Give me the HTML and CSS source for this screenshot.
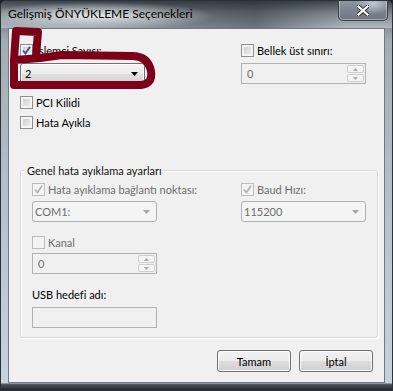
FILE: index.html
```html
<!DOCTYPE html>
<html lang="tr">
  <head>
    <meta charset="UTF-8" />
    <meta name="viewport" content="width=device-width, initial-scale=1.0" />
    <title>Gelişmiş ÖNYÜKLEME Seçenekleri</title>
    <link rel="stylesheet" href="styles.css">
  </head>
  <body>
    <div class="window">
      <div class="titlebar">
        <span class="title">Gelişmiş ÖNYÜKLEME Seçenekleri</span>
        <button class="close-btn" aria-label="Kapat">
          <svg width="12" height="11" viewBox="0 0 12 11">
            <path d="M1.5 1.5 L10.5 9.5 M10.5 1.5 L1.5 9.5" stroke="#2b3036" stroke-width="4" stroke-linecap="round" fill="none" />
            <path d="M1.5 1.5 L10.5 9.5 M10.5 1.5 L1.5 9.5" stroke="#fff" stroke-width="2.2" stroke-linecap="square" fill="none" />
          </svg>
        </button>
      </div>

      <div class="client">
        <div class="cols top-cols">
          <div class="col">
            <label class="check">
              <span class="box checked">
                <svg width="11" height="11" viewBox="0 0 11 11"><path d="M2 5.5 L4.5 8.5 L9 1.8" /></svg>
              </span>
              İşlemci Sayısı:
            </label>
            <div class="combo">
              <span>2</span>
              <svg class="arrow" width="7" height="4" viewBox="0 0 7 4"><polygon points="0,0 7,0 3.5,4" /></svg>
            </div>
          </div>
          <div class="col">
            <label class="check"><span class="box"></span>Bellek üst sınırı:</label>
            <div class="spin">
              <span>0</span>
              <div class="spin-btns">
                <span><svg width="5" height="3" viewBox="0 0 5 3"><polygon points="2.5,0 5,3 0,3" /></svg></span>
                <span><svg width="5" height="3" viewBox="0 0 5 3"><polygon points="0,0 5,0 2.5,3" /></svg></span>
              </div>
            </div>
          </div>
        </div>

        <label class="check pci"><span class="box"></span>PCI Kilidi</label>
        <label class="check debug"><span class="box"></span>Hata Ayıkla</label>

        <fieldset class="group">
          <legend>Genel hata ayıklama ayarları</legend>
          <div class="cols">
            <div class="col">
              <label class="check disabled">
                <span class="box checked">
                  <svg width="11" height="11" viewBox="0 0 11 11"><path d="M2 5.5 L4.5 8.5 L9 1.8" /></svg>
                </span>
                Hata ayıklama bağlantı noktası:
              </label>
              <div class="combo disabled">
                <span>COM1:</span>
                <svg class="arrow" width="7" height="4" viewBox="0 0 7 4"><polygon points="0,0 7,0 3.5,4" /></svg>
              </div>
            </div>
            <div class="col">
              <label class="check disabled">
                <span class="box checked">
                  <svg width="11" height="11" viewBox="0 0 11 11"><path d="M2 5.5 L4.5 8.5 L9 1.8" /></svg>
                </span>
                Baud Hızı:
              </label>
              <div class="combo disabled">
                <span>115200</span>
                <svg class="arrow" width="7" height="4" viewBox="0 0 7 4"><polygon points="0,0 7,0 3.5,4" /></svg>
              </div>
            </div>
          </div>

          <div class="col channel">
            <label class="check disabled"><span class="box"></span>Kanal</label>
            <div class="spin">
              <span>0</span>
              <div class="spin-btns">
                <span><svg width="5" height="3" viewBox="0 0 5 3"><polygon points="2.5,0 5,3 0,3" /></svg></span>
                <span><svg width="5" height="3" viewBox="0 0 5 3"><polygon points="0,0 5,0 2.5,3" /></svg></span>
              </div>
            </div>
          </div>

          <div class="col usb">
            <span class="label">USB hedefi adı:</span>
            <div class="textbox"></div>
          </div>
        </fieldset>

        <div class="buttons">
          <button class="btn">Tamam</button>
          <button class="btn">İptal</button>
        </div>
      </div>

      <!-- kırmızı el çizimi işaret -->
      <svg class="scribble" width="393" height="391" viewBox="0 0 393 391">
        <path d="M36 57 L38 32 L16 31 L14 60 L14 85 L141 85 Q153 84 151 71 Q148 56 132 56 L62 55 L40 58 L15 60" />
      </svg>
    </div>
  </body>
</html>
```
FILE: styles.css
```css
body {
  margin: 0;
  background: #1e2328;
  font-family: "Lato", "Liberation Sans", sans-serif;
  font-size: 11px;
  color: #000;
}

.window {
  position: relative;
  width: 393px;
  height: 391px;
  display: flex;
  flex-direction: column;
  box-sizing: border-box;
  border: 1px solid #2c3238;
  border-radius: 6px 6px 0 0;
  background:
    linear-gradient(to top, #22272c 0, #4f5860 6px, rgba(0, 0, 0, 0) 7px),
    linear-gradient(180deg, #59626b 0, #a3acb4 40px, #b4c1cb 200px, #c4d3dc 380px);
  overflow: hidden;
}

/* başlık çubuğu */
.titlebar {
  display: flex;
  align-items: flex-start;
  height: 27px;
  background:
    radial-gradient(ellipse 120px 14px at 95px 15px, rgba(236, 239, 242, 0.95), rgba(236, 239, 242, 0) 100%),
    linear-gradient(90deg, rgba(0, 0, 0, 0) 0, rgba(30, 35, 40, 0.45) 65%, rgba(0, 0, 0, 0) 88%),
    linear-gradient(180deg, #3f464d 0, #7f8891 45%, #b0b8bf 100%);
}

.title {
  padding: 5px 0 0 7px;
  font-size: 12px;
  line-height: 16px;
  color: #000;
}

.close-btn {
  margin: -1px 4px 0 auto;
  width: 50px;
  height: 21px;
  padding: 0;
  display: flex;
  align-items: center;
  justify-content: center;
  border: 1px solid #3a4047;
  border-top: none;
  border-radius: 0 0 5px 5px;
  box-shadow: inset 0 0 0 1px rgba(255, 255, 255, 0.35);
  background:
    radial-gradient(ellipse 18px 10px at 34px 4px, rgba(230, 236, 242, 0.6), rgba(230, 236, 242, 0)),
    linear-gradient(180deg, #8d98a2 0, #7a8591 50%, #6c7782 100%);
}

.client {
  flex: 1;
  margin: 0 7px 7px;
  display: flex;
  flex-direction: column;
  padding: 15px 11px 0;
  background: #f0f0f0;
  border: 1px solid #6f7a85;
}

.cols {
  display: grid;
  grid-template-columns: 125px 125px;
  column-gap: 96px;
}

.col {
  display: flex;
  flex-direction: column;
  gap: 6px;
}

/* onay kutuları */
.check {
  display: flex;
  align-items: center;
  gap: 3px;
  height: 13px;
  line-height: 13px;
  white-space: nowrap;
}

.check.disabled {
  color: #6d6d6d;
}

.box {
  flex: none;
  width: 13px;
  height: 13px;
  box-sizing: border-box;
  display: flex;
  align-items: center;
  justify-content: center;
  border: 1px solid #8f8f8f;
  background: linear-gradient(135deg, #c4c6c8, #f7f7f7);
  box-shadow: inset 0 0 0 2px #f4f4f4;
}

.box svg path {
  fill: none;
  stroke: #3d5490;
  stroke-width: 1.9;
}

.check.disabled .box {
  border-color: #bcbcbc;
  background: #f4f4f4;
  box-shadow: none;
}

.check.disabled .box svg path {
  stroke: #b4b4b4;
}

.pci {
  margin-top: 12px;
}

.debug {
  margin-top: 7px;
}

/* açılır listeler */
.combo {
  height: 21px;
  box-sizing: border-box;
  display: flex;
  align-items: center;
  justify-content: space-between;
  padding: 0 6px 0 4px;
  border: 1px solid #707070;
  border-radius: 3px;
  background: linear-gradient(180deg, #f4f4f4 0, #ececec 50%, #dfdfdf 51%, #d2d2d2 100%);
  box-shadow: inset 0 0 0 1px #fbfbfb;
}

.combo .arrow polygon {
  fill: #000;
}

.combo.disabled {
  padding-left: 2px;
  border-color: #adb2b5;
  background: #f4f4f4;
  box-shadow: none;
  color: #6d6d6d;
}

.combo.disabled .arrow polygon {
  fill: #a6a6a6;
}

.spin {
  height: 21px;
  box-sizing: border-box;
  display: flex;
  align-items: center;
  justify-content: space-between;
  padding: 0 1px 0 5px;
  border: 1px solid #b1b1b1;
  background: #f0f0f0;
  color: #6d6d6d;
}

.spin-btns {
  display: flex;
  flex-direction: column;
  gap: 1px;
  width: 17px;
  height: 17px;
}

.spin-btns span {
  flex: 1;
  display: flex;
  align-items: center;
  justify-content: center;
  border: 1px solid #cfcfcf;
  border-radius: 2px;
  background: #f4f4f4;
}

.spin-btns polygon {
  fill: #a8a8a8;
}

/* grup kutusu */
.group {
  margin: 35px 0 0;
  padding: 6px 11px 9px;
  width: 354px;
  box-sizing: border-box;
  border: 1px solid #d5d8db;
  border-radius: 3px;
  box-shadow: 1px 1px 0 #fff, inset 1px 1px 0 #fff;
}

.group legend {
  margin-left: -7px;
  padding: 0 2px;
  line-height: 13px;
  color: #111;
}

.group .cols {
  column-gap: 84px;
}

.group .col {
  gap: 5px;
}

.channel {
  width: 125px;
  margin-top: 14px;
}

.channel.col {
  gap: 4px;
}

.usb {
  width: 125px;
  margin-top: 14px;
}

.usb .label {
  line-height: 13px;
  color: #000;
}

.usb.col {
  gap: 6px;
}

.textbox {
  height: 21px;
  box-sizing: border-box;
  border: 1px solid #b1b1b1;
  background: #f0f0f0;
}

/* alt düğmeler */
.buttons {
  display: flex;
  justify-content: flex-end;
  gap: 8px;
  margin-top: 12px;
}

.btn {
  width: 74px;
  height: 22px;
  padding: 0;
  font-family: inherit;
  font-size: 11px;
  font-weight: normal;
  color: #000;
  border: 1px solid #707070;
  border-radius: 3px;
  background: linear-gradient(180deg, #f2f2f2 0, #ebebeb 50%, #dddddd 51%, #cfcfcf 100%);
  box-shadow: inset 0 0 0 1px #fcfcfc;
}

.scribble {
  position: absolute;
  top: -1px;
  left: -1px;
  pointer-events: none;
}

.scribble path {
  fill: none;
  stroke: #7c0018;
  stroke-width: 8;
  stroke-linejoin: round;
  stroke-linecap: round;
}
```
